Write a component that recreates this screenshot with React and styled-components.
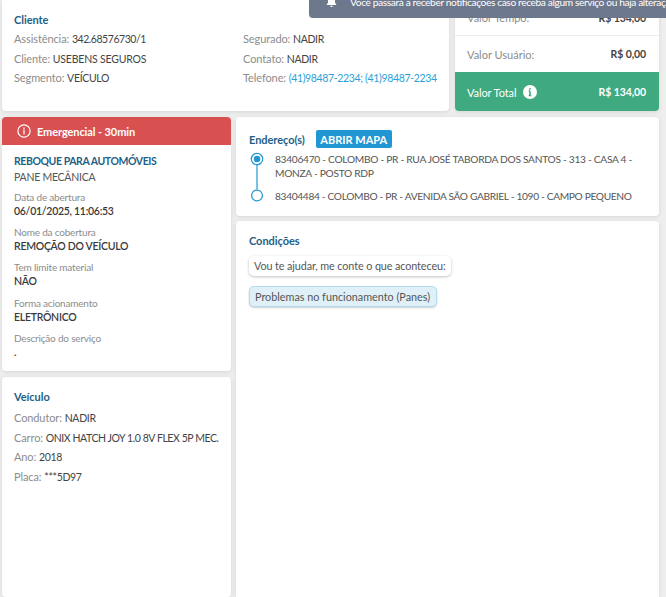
import React from 'react';
import styled, { createGlobalStyle } from 'styled-components';

const Global = createGlobalStyle`
  html, body { margin: 0; padding: 0; height: 597px; overflow: hidden; background: #eeeeee; }
  body { font-family: "Lato", "Noto Sans", sans-serif; color: #444; }
  #root { height: 597px; }
`;

const Page = styled.div`
  position: relative;
  height: 597px;
  overflow: hidden;
  padding: 0 7px 0 2px;
  box-sizing: border-box;
  display: flex;
  flex-direction: column;
  gap: 6px;
`;
const Card = styled.section`
  background: #fff;
  border-radius: 4px;
  box-shadow: 0 1px 4px rgba(0,0,0,.10);
  box-sizing: border-box;
`;
const TopRow = styled.div`
  display: flex;
  gap: 6px;
  height: 111px;
  flex: none;
`;
const ClientCard = styled(Card)`
  width: 447px;
  border-radius: 0 0 4px 4px;
  padding: 12px 12px 0;
`;
const Title = styled.h3`
  margin: 0;
  font-size: 11px;
  line-height: 15px;
  font-weight: 700;
  color: #1f5f86;
  letter-spacing: -0.05px;
  white-space: nowrap;
`;
const ClientGrid = styled.div`
  display: grid;
  grid-template-columns: 229px 1fr;
  margin-top: 2px;
`;
const Col = styled.div`
  display: flex;
  flex-direction: column;
`;
const Line = styled.div`
  font-size: 11px;
  line-height: 19.6px;
  height: 19.6px;
  color: #8c8c8c;
  white-space: nowrap;
  letter-spacing: -0.1px;
`;
const Val = styled.span`
  color: #444;
  font-size: 10.5px;
  letter-spacing: ${p => p.$ls ?? -0.32}px;
`;
const Phone = styled.span`
  color: #2b9fd8;
  font-size: 10.5px;
  letter-spacing: -0.35px;
`;
const ValueCard = styled(Card)`
  width: 204px;
  display: flex;
  flex-direction: column;
  overflow: hidden;
  border-radius: 0 0 4px 4px;
`;
const ValueRow = styled.div`
  display: flex;
  justify-content: space-between;
  align-items: ${p => p.$top ? 'flex-end' : 'center'};
  padding: 0 13px ${p => p.$top ? 11 : 0}px 12px;
  height: ${p => p.$h}px;
  box-sizing: border-box;
  flex: none;
  font-size: 11px;
  color: #8c8c8c;
  ${p => p.$top ? 'border-bottom: 1px solid #eeeeee;' : ''}
`;
const Amount = styled.b`
  font-size: 10.5px;
  font-weight: 700;
  color: #444;
  letter-spacing: -0.1px;
`;
const TotalRow = styled.div`
  flex: 1;
  background: #3fa97f;
  color: #fff;
  display: flex;
  align-items: center;
  justify-content: space-between;
  padding: 0 13px 0 12px;
  font-size: 10.5px;
  font-weight: 700;
  letter-spacing: -0.1px;
`;
const TotalLabel = styled.span`
  display: flex;
  align-items: center;
  gap: 7px;
  font-size: 11px;
  font-weight: 400;
  margin-top: 1px;
`;
const Main = styled.div`
  display: flex;
  gap: 5px;
  flex: 1;
  min-height: 0;
`;
const LeftCol = styled.div`
  width: 229px;
  flex: none;
  display: flex;
  flex-direction: column;
  gap: 6px;
`;
const RightCol = styled.div`
  flex: 1;
  display: flex;
  flex-direction: column;
  gap: 5px;
`;
const ServiceCard = styled(Card)`
  height: 254px;
  overflow: hidden;
`;
const Alert = styled.div`
  height: 28px;
  background: #d95050;
  color: #fff;
  display: flex;
  align-items: center;
  gap: 6px;
  padding-left: 15px;
  font-size: 11px;
  font-weight: 700;
  letter-spacing: -0.1px;
`;
const ServiceBody = styled.div`
  padding: 8px 12px 0;
`;
const ServiceName = styled.div`
  font-size: 10.5px;
  line-height: 16px;
  font-weight: 700;
  color: #1f5f86;
  letter-spacing: -0.42px;
`;
const Sub = styled.div`
  font-size: 10.5px;
  line-height: 17px;
  color: #555;
  letter-spacing: -0.25px;
  margin-bottom: 3.6px;
`;
const Field = styled.div`
  height: 35.4px;
`;
const FieldLabel = styled.div`
  font-size: 10px;
  line-height: 14px;
  color: #8c8c8c;
  letter-spacing: -0.2px;
`;
const FieldValue = styled.div`
  font-size: 10.5px;
  line-height: 14px;
  font-weight: 600;
  color: #3a3a3a;
  letter-spacing: -0.28px;
`;
const VehicleCard = styled(Card)`
  flex: 1;
  padding: 12px 12px;
`;
const VehicleList = styled.div`
  margin-top: 4px;
`;
const AddressCard = styled(Card)`
  height: 99px;
  padding: 13px 13px 0;
`;
const AddressHead = styled.div`
  display: flex;
  align-items: center;
  gap: 11px;
`;
const MapButton = styled.button`
  border: 0;
  height: 18px;
  width: 76px;
  padding: 0;
  background: #2097d3;
  color: #fff;
  border-radius: 2px;
  font-family: inherit;
  font-size: 11px;
  font-weight: 700;
  letter-spacing: 0;
`;
const Stops = styled.div`
  display: grid;
  grid-template-columns: 26px 1fr;
  margin-top: 4px;
`;
const Track = styled.div`
  display: flex;
  flex-direction: column;
  align-items: flex-start;
  padding-left: 1px;
`;
const Addr = styled.div`
  font-size: 10.2px;
  line-height: 14px;
  color: #555;
  letter-spacing: ${p => p.$ls ?? -0.29}px;
  padding-bottom: ${p => p.$pb || 0}px;
`;
const ConditionsCard = styled(Card)`
  flex: 1;
  padding: 12px 13px;
  border-radius: 4px 4px 0 0;
`;
const Bubble = styled.div`
  display: table;
  margin-top: 8px;
  font-size: 10.8px;
  line-height: 20px;
  padding: 0 5px;
  border-radius: 5px;
  background: #fff;
  color: #555;
  letter-spacing: -0.1px;
  box-shadow: 0 1px 3px rgba(0,0,0,.25);
`;
const Choice = styled(Bubble)`
  margin-top: 10px;
  background: #dff0f8;
  border: 1px solid #b5dcee;
  padding: 0 6px 0 5px;
  line-height: 19px;
  letter-spacing: 0;
  box-shadow: 0 1px 2px rgba(0,0,0,.2);
`;
const Toast = styled.div`
  position: absolute;
  top: 0;
  right: 0;
  width: 357px;
  height: 18px;
  background: #6d788c;
  border-radius: 0 0 0 4px;
  color: #fff;
  display: flex;
  align-items: flex-start;
  overflow: hidden;
  white-space: nowrap;
  font-size: 10.2px;
  line-height: 14px;
  letter-spacing: -0.38px;
  padding-left: 17px;
  gap: 13px;
  box-sizing: border-box;
`;
const ToastText = styled.span`
  margin-top: -5px;
`;

const Info = ({ size = 14 }) => (
  <svg width={size} height={size} viewBox="0 0 16 16" fill="none" stroke="#fff" strokeWidth="1.4">
    <circle cx="8" cy="8" r="7" />
    <path d="M8 7.4v4M8 4.4v1.2" strokeLinecap="round" />
  </svg>
);
const InfoSolid = () => (
  <svg width="14" height="14" viewBox="0 0 16 16">
    <circle cx="8" cy="8" r="8" fill="#fff" />
    <path d="M8 7v5M8 3.6v1.8M6.6 7H8M6.6 12h2.8" stroke="#3fa97f" strokeWidth="1.8" fill="none" />
  </svg>
);
const Bell = () => (
  <svg width="11" height="8" viewBox="0 0 11 8" style={{ flex: 'none' }}>
    <path d="M5.5 -4a3.5 3.5 0 0 1 3.5 3.5V2.5L10.5 5h-10L2 2.5V-.5A3.5 3.5 0 0 1 5.5-4zM4.2 5.8h2.6a1.3 1.3 0 0 1-2.6 0z" fill="#fff" />
  </svg>
);
const Route = () => (
  <svg width="14" height="46" viewBox="0 0 14 46" style={{ overflow: 'visible' }}>
    <circle cx="7" cy="7" r="5.7" fill="#fff" stroke="#2097d3" strokeWidth="1.2" />
    <circle cx="7" cy="7" r="3.3" fill="#2097d3" />
    <path d="M7 12.5v25" stroke="#2097d3" strokeWidth="1.2" />
    <circle cx="7" cy="43.5" r="5.4" fill="#fff" stroke="#2097d3" strokeWidth="1.2" />
  </svg>
);

export default function App() {
  return (
    <Page>
      <Global />
      <TopRow>
        <ClientCard>
          <Title>Cliente</Title>
          <ClientGrid>
            <Col>
              <Line>Assistência: <Val $ls={-0.45}>342.68576730/1</Val></Line>
              <Line>Cliente: <Val $ls={-0.2}>USEBENS SEGUROS</Val></Line>
              <Line>Segmento: <Val>VEÍCULO</Val></Line>
            </Col>
            <Col>
              <Line>Segurado: <Val>NADIR</Val></Line>
              <Line>Contato: <Val>NADIR</Val></Line>
              <Line>Telefone: <Phone>(41)98487-2234; (41)98487-2234</Phone></Line>
            </Col>
          </ClientGrid>
        </ClientCard>
        <ValueCard>
          <ValueRow $h={36} $top>
            <span>Valor Tempo:</span><Amount>R$ 134,00</Amount>
          </ValueRow>
          <ValueRow $h={36}>
            <span>Valor Usuário:</span><Amount>R$ 0,00</Amount>
          </ValueRow>
          <TotalRow>
            <TotalLabel>Valor Total <InfoSolid /></TotalLabel>
            <span>R$ 134,00</span>
          </TotalRow>
        </ValueCard>
      </TopRow>
      <Main>
        <LeftCol>
          <ServiceCard>
            <Alert><Info /> Emergencial - 30min</Alert>
            <ServiceBody>
              <ServiceName>REBOQUE PARA AUTOMÓVEIS</ServiceName>
              <Sub>PANE MECÂNICA</Sub>
              <Field><FieldLabel>Data de abertura</FieldLabel><FieldValue>06/01/2025, 11:06:53</FieldValue></Field>
              <Field><FieldLabel>Nome da cobertura</FieldLabel><FieldValue>REMOÇÃO DO VEÍCULO</FieldValue></Field>
              <Field><FieldLabel>Tem limite material</FieldLabel><FieldValue>NÃO</FieldValue></Field>
              <Field><FieldLabel>Forma acionamento</FieldLabel><FieldValue>ELETRÔNICO</FieldValue></Field>
              <Field><FieldLabel>Descrição do serviço</FieldLabel><FieldValue>.</FieldValue></Field>
            </ServiceBody>
          </ServiceCard>
          <VehicleCard>
            <Title>Veículo</Title>
            <VehicleList>
              <Line>Condutor: <Val>NADIR</Val></Line>
              <Line>Carro: <Val $ls={-0.43}>ONIX HATCH JOY 1.0 8V FLEX 5P MEC.</Val></Line>
              <Line>Ano: <Val>2018</Val></Line>
              <Line>Placa: <Val>***5D97</Val></Line>
            </VehicleList>
          </VehicleCard>
        </LeftCol>
        <RightCol>
          <AddressCard>
            <AddressHead>
              <Title>Endereço(s)</Title>
              <MapButton>ABRIR MAPA</MapButton>
            </AddressHead>
            <Stops>
              <Track><Route /></Track>
              <div>
                <Addr $pb={9}>83406470 - COLOMBO - PR - RUA JOSÉ TABORDA DOS SANTOS - 313 - CASA 4 - MONZA - POSTO RDP</Addr>
                <Addr $ls={-0.34}>83404484 - COLOMBO - PR - AVENIDA SÃO GABRIEL - 1090 - CAMPO PEQUENO</Addr>
              </div>
            </Stops>
          </AddressCard>
          <ConditionsCard>
            <Title>Condições</Title>
            <Bubble>Vou te ajudar, me conte o que aconteceu:</Bubble>
            <Choice>Problemas no funcionamento (Panes)</Choice>
          </ConditionsCard>
        </RightCol>
      </Main>
      <Toast><Bell /><ToastText>Você passará a receber notificações caso receba algum serviço ou haja alteração</ToastText></Toast>
    </Page>
  );
}
